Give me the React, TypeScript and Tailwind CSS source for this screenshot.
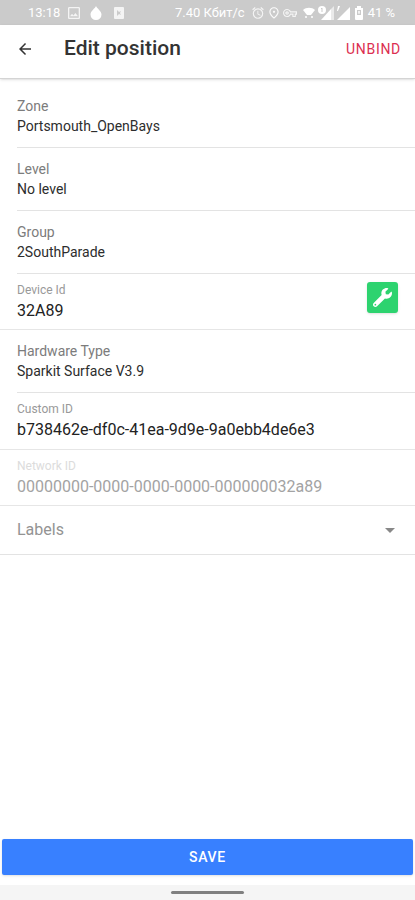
import { useState } from 'react';
import { FaWrench } from 'react-icons/fa';
import { MdArrowBack, MdArrowDropDown, MdOutlineAlarm, MdOutlineImage, MdOutlinePlace, MdOutlineVpnKey } from 'react-icons/md';

function StatusBar() {
  return (
    <div className="flex h-[25px] shrink-0 items-center bg-[#cbcbcb] pr-5 pl-7 text-[13px] text-white">
      <span>13:18</span>
      <MdOutlineImage className="ml-1.5 size-4 opacity-80" />
      {/* drop */}
      <svg className="ml-2 h-3.5 w-3" viewBox="0 0 12 14">
        <path fill="currentColor" d="M6 0c1 2.5 5.5 5 5.5 8.5a5.5 5.5 0 0 1-11 0C.5 5 5 2.5 6 0z" />
      </svg>
      <svg className="ml-3 h-3 w-2.5 opacity-80" viewBox="0 0 10 12">
        <path fill="currentColor" fillRule="evenodd" d="M1 0h8a1 1 0 0 1 1 1v10a1 1 0 0 1-1 1H1a1 1 0 0 1-1-1V1a1 1 0 0 1 1-1zM3 3v6l2-2 2 1-1-2 1-2-2 1z" />
      </svg>
      <span className="ml-auto">7.40 Кбит/с</span>
      <MdOutlineAlarm className="ml-1.5 size-3.5 opacity-80" />
      <MdOutlinePlace className="ml-0.5 size-3.5 opacity-90" />
      <MdOutlineVpnKey className="ml-0.5 size-3.5 opacity-80" />
      {/* wifi */}
      <svg className="ml-1.5 h-3 w-3" viewBox="0 0 12 12" fill="currentColor">
        <path d="M0 3c3-3 9-3 12 0L8 8H4z" />
        <circle cx="3" cy="10" r="1" />
        <circle cx="9" cy="10" r="1" />
      </svg>
      {/* first sim, with the data badge */}
      <svg className="ml-0.5 h-[18px] w-[18px]" viewBox="0 0 18 18">
        <path fill="currentColor" d="M14 5v11H4z" />
        <path fill="currentColor" fillOpacity="0.6" d="M14 5l3-3v14h-3z" />
        <circle cx="5" cy="6" r="5" fill="#cbcbcb" />
        <circle cx="5" cy="6" r="4" fill="currentColor" />
        <path d="M5 4v4M4 5l1-1" stroke="#cbcbcb" fill="none" />
      </svg>
      {/* second sim */}
      <svg className="h-[18px] w-[17px]" viewBox="0 0 17 18" fill="currentColor">
        <path d="M15 3v13H2z" />
        <path d="M3 2h2L3 7H2z" />
      </svg>
      <svg className="ml-0.5 h-3.5 w-2.5" viewBox="0 0 10 14">
        <path fill="currentColor" fillRule="evenodd" d="M3 0h4v2h2v11a1 1 0 0 1-1 1H2a1 1 0 0 1-1-1V2h2zM3 4v5h4V4z" />
        <path d="M5 5v3M4 6h2" stroke="currentColor" />
      </svg>
      <span className="ml-1">41 %</span>
    </div>
  );
}

function InfoRow({ label, value }: { label: string; value: string }) {
  return (
    <div className="ml-[17px] h-[63px] border-b border-[#e3e3e3] pt-[11px]">
      <dt className="text-sm leading-5 text-[#7c7c7c]">{label}</dt>
      <dd className="text-sm leading-5 text-[#2d2d2d]">{value}</dd>
    </div>
  );
}

interface FieldProps {
  id: string;
  label: string;
  initial: string;
  disabled?: boolean;
}

function Field({ id, label, initial, disabled }: FieldProps) {
  const [value, setValue] = useState(initial);

  return (
    <div className="min-w-0 flex-1">
      <label htmlFor={id} className={`block text-xs leading-4 ${disabled ? 'text-[#dcdcdc]' : 'text-[#999]'}`}>
        {label}
      </label>
      <input
        id={id}
        type="text"
        value={value}
        disabled={disabled}
        onChange={(e) => setValue(e.target.value)}
        className={`block h-[25px] w-full bg-transparent text-base outline-none ${disabled ? 'text-[#a3a3a3]' : 'text-[#222]'}`}
      />
    </div>
  );
}

export default function App() {
  const [labels, setLabels] = useState('');

  return (
    <div className="flex min-h-screen flex-col bg-white font-[Roboto,sans-serif]">
      <StatusBar />

      <header className="flex h-[54px] shrink-0 items-center border-b border-[#d4d4d4] px-4 pb-[5px] shadow-sm">
        <button type="button" aria-label="Back" className="text-[#333]">
          <MdArrowBack className="size-[18px]" />
        </button>
        <h1 className="ml-[30px] text-[21px] font-medium text-[#333]">Edit position</h1>
        <button type="button" className="-mr-[2px] ml-auto text-sm tracking-wider text-[#dc2f50]">
          UNBIND
        </button>
      </header>

      <main className="flex-1 pt-[6px]">
        <dl>
          <InfoRow label="Zone" value="Portsmouth_OpenBays" />
          <InfoRow label="Level" value="No level" />
          <InfoRow label="Group" value="2SouthParade" />
        </dl>

        <div className="flex h-14 items-start border-b border-[#e6e6e6] px-[17px] pt-2">
          <Field id="device-id" label="Device Id" initial="32A89" />
          <button
            type="button"
            aria-label="Configure device"
            className="flex size-[31px] items-center justify-center rounded-[3px] bg-[#2dd36f] text-white shadow"
          >
            <FaWrench className="size-[19px]" />
          </button>
        </div>

        <dl>
          <InfoRow label="Hardware Type" value="Sparkit Surface V3.9" />
        </dl>

        <div className="flex h-[57px] border-b border-[#e6e6e6] px-[17px] pt-2">
          <Field id="custom-id" label="Custom ID" initial="b738462e-df0c-41ea-9d9e-9a0ebb4de6e3" />
        </div>
        <div className="flex h-14 border-b border-[#e6e6e6] px-[17px] pt-2">
          <Field id="network-id" label="Network ID" initial="00000000-0000-0000-0000-000000032a89" disabled />
        </div>

        <div className="relative border-b border-[#e3e3e3]">
          <select
            aria-label="Labels"
            value={labels}
            onChange={(e) => setLabels(e.target.value)}
            className="block h-12 w-full appearance-none bg-transparent px-[17px] text-base text-[#939393] outline-none"
          >
            <option value="">Labels</option>
          </select>
          <MdArrowDropDown className="pointer-events-none absolute top-3 right-[13px] size-6 text-[#888]" />
        </div>
      </main>

      <footer className="shrink-0">
        <div className="px-[2px] pb-[10px]">
          <button type="button" className="h-9 w-full rounded-[2px] bg-[#3880ff] text-sm font-medium tracking-wider text-white shadow">
            SAVE
          </button>
        </div>
        <div className="flex h-[15px] items-center justify-center bg-[#f5f5f5]">
          <div className="h-[3px] w-[73px] rounded-full bg-[#808080]" />
        </div>
      </footer>
    </div>
  );
}
